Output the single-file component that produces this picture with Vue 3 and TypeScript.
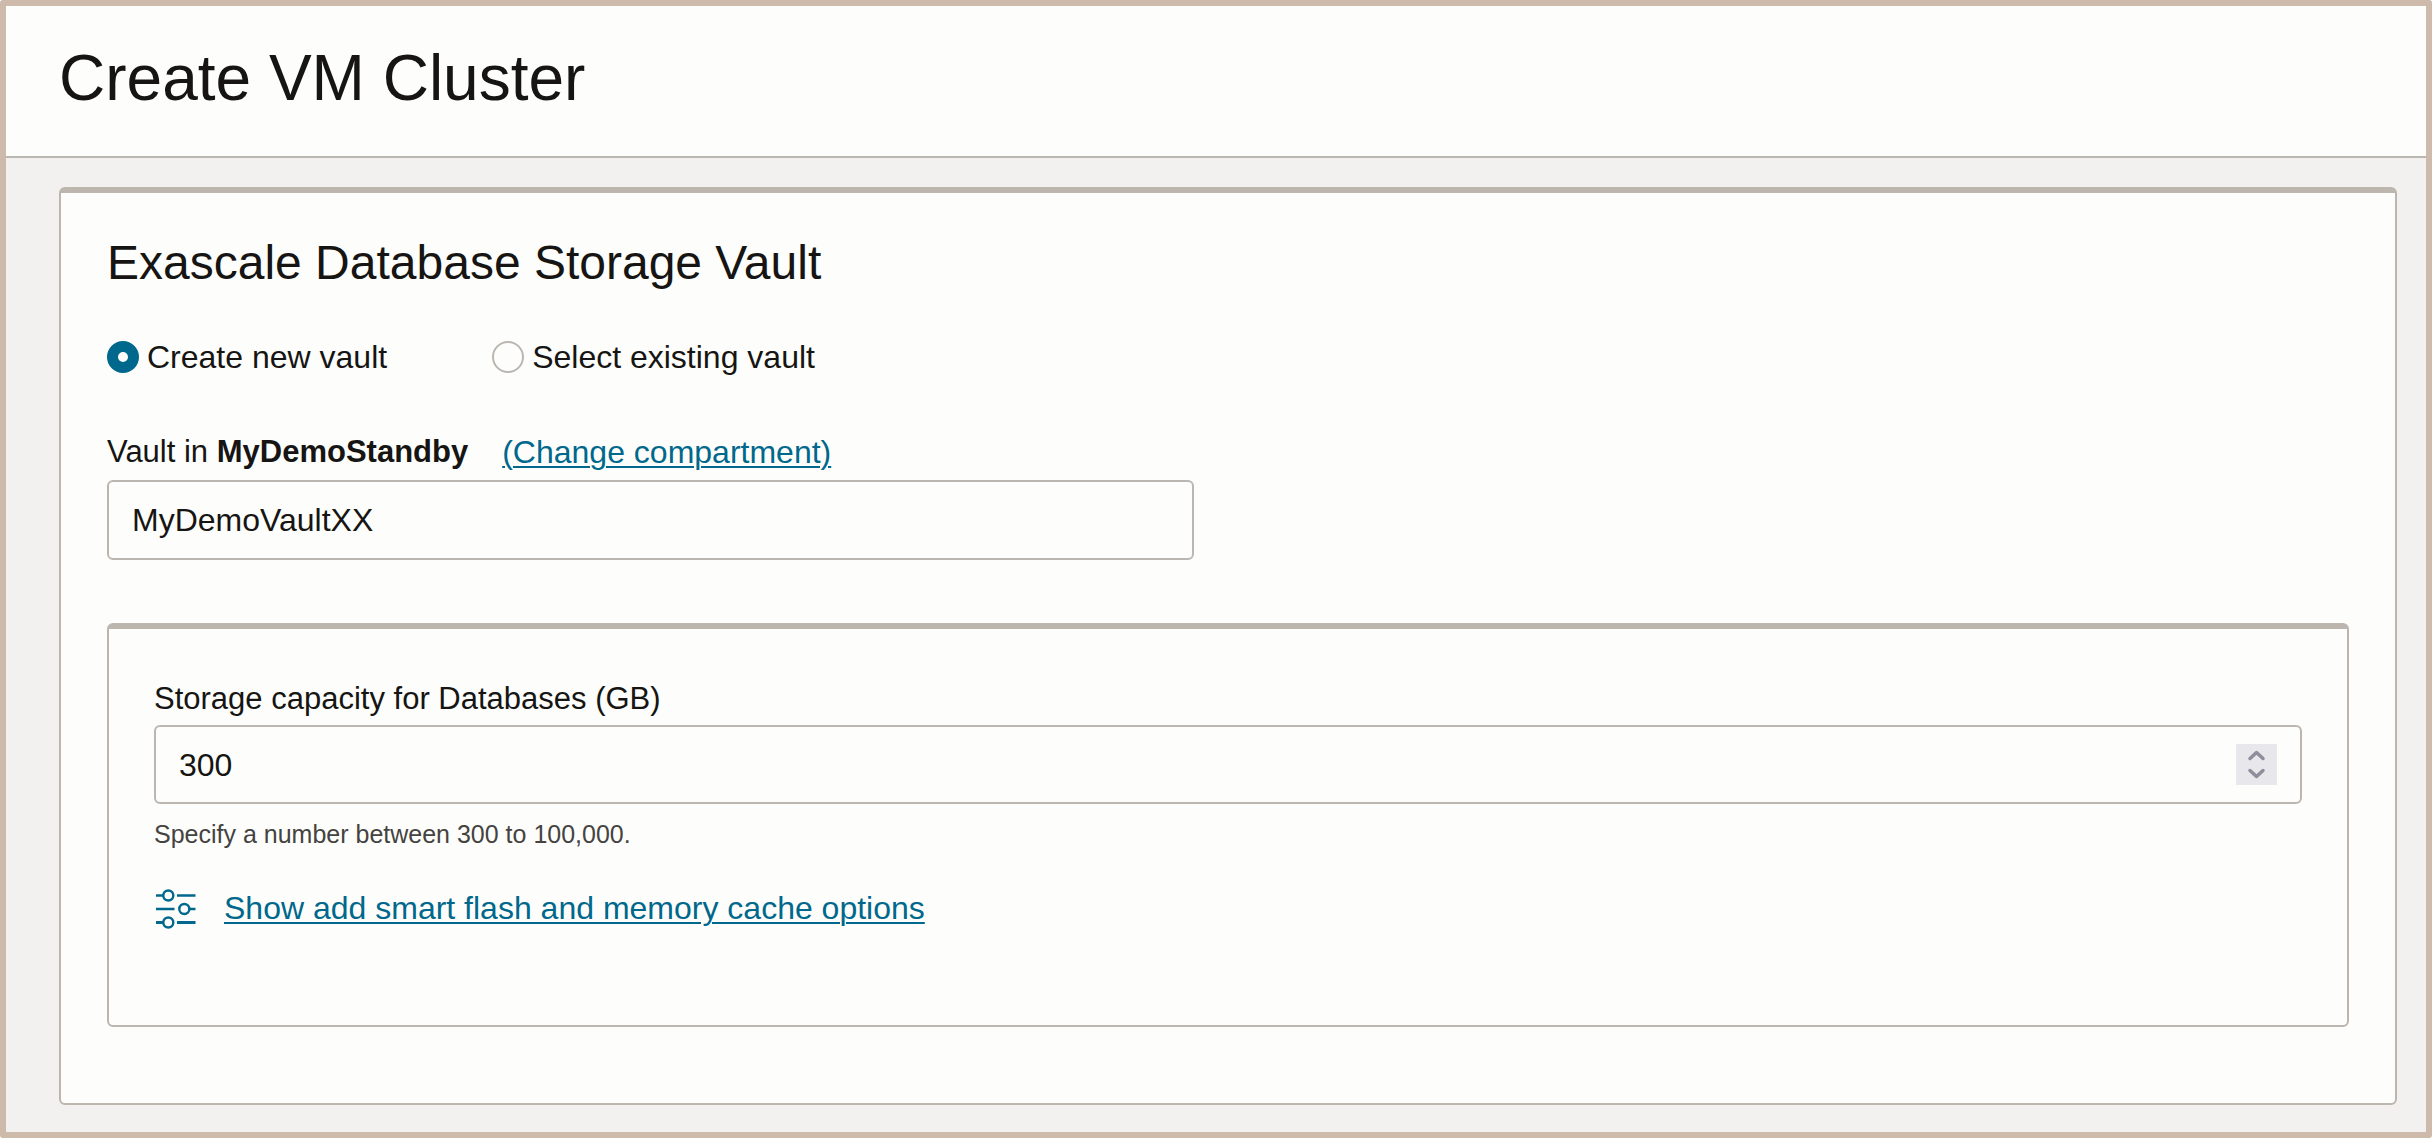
<script setup lang="ts">
import { ref } from 'vue'

type VaultMode = 'create' | 'existing'

const MIN_CAPACITY = 300
const MAX_CAPACITY = 100000

const mode = ref<VaultMode>('create')
const vaultName = ref('MyDemoVaultXX')
const capacity = ref<number>(MIN_CAPACITY)

function step(delta: number): void {
  capacity.value = Math.min(MAX_CAPACITY, Math.max(MIN_CAPACITY, Number(capacity.value) + delta))
}
</script>

<template>
  <div class="page">
    <header class="page-header">
      <h1>Create VM Cluster</h1>
    </header>

    <main class="page-body">
      <section class="card">
        <h2>Exascale Database Storage Vault</h2>

        <div class="radios" role="radiogroup" aria-label="Vault source">
          <label class="radio">
            <input v-model="mode" type="radio" name="vault-mode" value="create" />
            <span>Create new vault</span>
          </label>
          <label class="radio">
            <input v-model="mode" type="radio" name="vault-mode" value="existing" />
            <span>Select existing vault</span>
          </label>
        </div>

        <div class="label-row">
          <label class="field-label" for="vault-name">Vault in <strong>MyDemoStandby</strong></label>
          <a href="#compartment">(Change compartment)</a>
        </div>
        <input id="vault-name" v-model="vaultName" class="field vault-field" type="text" />

        <div class="card panel">
          <label class="field-label" for="capacity">Storage capacity for Databases (GB)</label>
          <div class="field number-field">
            <input
              id="capacity"
              v-model="capacity"
              type="number"
              :min="MIN_CAPACITY"
              :max="MAX_CAPACITY"
              aria-describedby="capacity-hint"
            />
            <div class="stepper">
              <button type="button" aria-label="Increase" @click="step(1)">
                <svg viewBox="0 0 41 20" width="41" height="20" aria-hidden="true">
                  <path d="M14 14.500 20.500 8.500 27 14.500" />
                </svg>
              </button>
              <button type="button" aria-label="Decrease" @click="step(-1)">
                <svg viewBox="0 0 41 20" width="41" height="20" aria-hidden="true">
                  <path d="M14 5.500 20.500 11.500 27 5.500" />
                </svg>
              </button>
            </div>
          </div>
          <p id="capacity-hint" class="hint">Specify a number between 300 to 100,000.</p>

          <div class="options">
            <svg class="sliders" viewBox="0 0 44 44" width="44" height="44" aria-hidden="true">
              <path d="M2 9.500H9M23 9.500H41.500M2 23H20.500M35.500 23H41.500" stroke-width="2.400" />
              <path d="M2 36.500H9M23 36.500H41.500" stroke-width="3.200" />
              <circle cx="14.300" cy="9.500" r="5" stroke-width="2.400" />
              <circle cx="30.300" cy="23" r="5" stroke-width="2.400" />
              <circle cx="14.300" cy="36.500" r="5" stroke-width="2.400" />
            </svg>
            <a href="#cache-options">Show add smart flash and memory cache options</a>
          </div>
        </div>
      </section>
    </main>
  </div>
</template>

<style>
body {
  background: #fdfefb;
}
</style>

<style scoped>
* {
  box-sizing: border-box;
}

.page {
  display: flex;
  flex-direction: column;
  min-height: 100vh;
  border: 6px solid #cdbaaa;
  border-radius: 3px;
  background: #f3f1f0;
  color: #161513;
  font-family: "Liberation Sans", Arial, sans-serif;
  font-size: 32px;
  line-height: 40px;
}

h1,
h2,
p {
  margin: 0;
  font-weight: 400;
}

h1 {
  font-size: 64px;
  line-height: 80px;
}

h2 {
  font-size: 48px;
  line-height: 56px;
}

.page-header {
  padding: 32px 53px 38px;
  border-bottom: 2px solid #bcb6b1;
  background: #fdfefb;
}

.page-body {
  padding: 29px 29px 27px 53px;
}

.card {
  padding: 42px 46px 76px;
  border: 2px solid #bcb6ae;
  border-top-width: 6px;
  border-radius: 6px;
  background: #fdfefb;
}

.radios {
  display: flex;
  gap: 105px;
  margin-top: 46px;
}

.radio {
  display: flex;
  align-items: center;
  gap: 8px;
}

.radio input {
  appearance: none;
  width: 32px;
  height: 32px;
  margin: 0;
  border: 2px solid #bcb6b1;
  border-radius: 50%;
  background: #fdfefb;
}

.radio input:checked {
  border: 11px solid #00688c;
}

.label-row {
  display: flex;
  gap: 34px;
  margin-top: 55px;
}

.field-label {
  display: block;
  font-size: 31px;
}

a {
  color: #00688c;
  text-decoration: underline;
  text-decoration-thickness: 2px;
  text-underline-offset: 3px;
}

.field {
  height: 80px;
  border: 2px solid #bcb6b1;
  border-radius: 6px;
  background: #fdfefb;
}

.vault-field {
  display: block;
  width: 48.5%;
  margin-top: 8px;
  padding: 0 23px;
  color: inherit;
  font: inherit;
}

.panel {
  margin-top: 63px;
  padding: 50px 45px 95px;
}

.number-field {
  display: flex;
  align-items: center;
  height: 79px;
  margin-top: 6px;
  padding: 0 23px;
}

.number-field input {
  flex: 1;
  min-width: 0;
  padding: 0;
  border: 0;
  background: none;
  color: inherit;
  font: inherit;
  appearance: textfield;
}

.number-field input::-webkit-inner-spin-button,
.number-field input::-webkit-outer-spin-button {
  margin: 0;
  appearance: none;
}

.stepper {
  display: flex;
  flex-direction: column;
  justify-content: space-between;
  width: 41px;
  height: 41px;
  background: #e8e7ec;
}

.stepper button {
  display: block;
  height: 20px;
  padding: 0;
  border: 0;
  background: none;
}

.stepper svg {
  display: block;
  fill: none;
  stroke: #8f8e9c;
  stroke-width: 3.5;
  stroke-linecap: round;
  stroke-linejoin: round;
}

.hint {
  margin-top: 14px;
  color: #454341;
  font-size: 25px;
  line-height: 32px;
}

.options {
  display: flex;
  align-items: center;
  gap: 26px;
  margin-top: 36px;
}

.sliders {
  flex: none;
  fill: none;
  stroke: #00688c;
}
</style>
